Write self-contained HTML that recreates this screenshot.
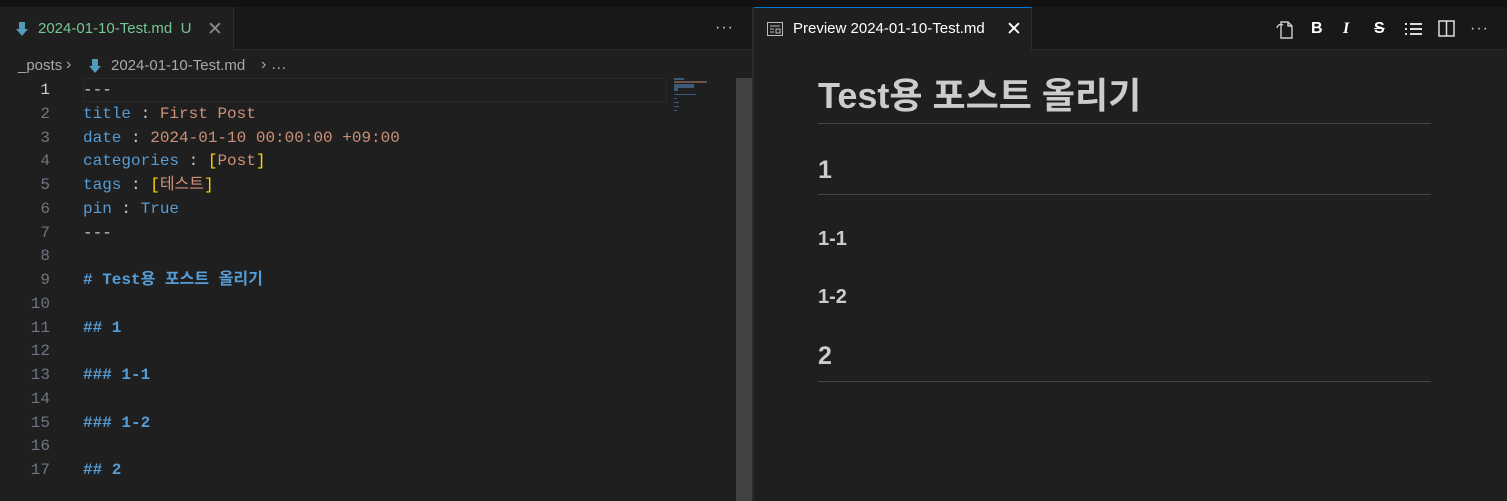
<!DOCTYPE html>
<html><head><meta charset="utf-8"><style>
*{margin:0;padding:0;box-sizing:border-box}
body{width:1507px;height:501px;overflow:hidden;background:#1f1f1f;font-family:"Segoe UI","Liberation Sans","Noto Sans CJK KR",sans-serif;position:relative}
.abs{position:absolute}
.mono{font-family:"Liberation Mono","Noto Sans CJK KR",monospace;font-size:16px;white-space:pre;line-height:24px;height:24px}
.ln{position:absolute;left:0;width:50px;text-align:right;color:#6e7681;font-family:"Liberation Mono",monospace;font-size:16px;line-height:24px}
.code{position:absolute;left:83px}
.b{color:#569cd6}.o{color:#ce9178}.w{color:#cccccc}.y{color:#ffd700}
.h{color:#569cd6;font-weight:bold}
.pv{position:absolute;left:818px;color:#cccccc;font-weight:bold;font-family:"Liberation Sans","Noto Sans CJK KR",sans-serif}
.hr{position:absolute;left:818px;width:613px;height:1px;background:#444}
</style></head><body>
<div class="abs" style="left:0;top:0;width:1507px;height:7px;background:#121212"></div>
<div class="abs" style="left:0;top:7px;width:1507px;height:43px;background:#181818;border-bottom:1px solid #2b2b2b"></div>
<div class="abs" style="left:0;top:7px;width:234px;height:43px;background:#1f1f1f;border-right:1px solid #2b2b2b"></div>
<svg class="abs" style="left:16px;top:22px" width="12" height="14" viewBox="0 0 12 14"><path d="M3 0h6v7h3l-6 7-6-7h3z" fill="#519aba"/></svg>
<div class="abs" style="left:38px;top:20px;color:#73c991;font-size:15px">2024-01-10-Test.md&nbsp; U</div>
<div class="abs" style="left:207px;top:18px;color:#8b8b8b;font-size:19px">✕</div>
<div class="abs" style="left:715px;top:19px;color:#ccc;font-size:16px;letter-spacing:1px">···</div>
<div class="abs" style="left:18px;top:57px;color:#a9a9a9;font-size:15px">_posts</div>
<div class="abs" style="left:66px;top:56px;color:#a9a9a9;font-size:16px">›</div>
<svg class="abs" style="left:89px;top:59px" width="12" height="14" viewBox="0 0 12 14"><path d="M3 0h6v7h3l-6 7-6-7h3z" fill="#519aba"/></svg>
<div class="abs" style="left:111px;top:57px;color:#a9a9a9;font-size:15px">2024-01-10-Test.md</div>
<div class="abs" style="left:261px;top:56px;color:#a9a9a9;font-size:16px">› …</div>
<div class="abs" style="left:83px;top:78px;width:584px;height:24px;border:1px solid #282828"></div>
<div class="ln" style="top:78px;color:#ccc">1</div>
<div class="code mono w" style="top:78px">---</div>
<div class="ln" style="top:102px">2</div><div class="code mono" style="top:102px"><span class="b">title</span><span class="w"> : </span><span class="o">First Post</span></div>
<div class="ln" style="top:126px">3</div><div class="code mono" style="top:126px"><span class="b">date</span><span class="w"> : </span><span class="o">2024-01-10 00:00:00 +09:00</span></div>
<div class="ln" style="top:149px">4</div><div class="code mono" style="top:149px"><span class="b">categories</span><span class="w"> : </span><span class="y">[</span><span class="o">Post</span><span class="y">]</span></div>
<div class="ln" style="top:173px">5</div><div class="code mono" style="top:173px"><span class="b">tags</span><span class="w"> : </span><span class="y">[</span><span class="o">테스트</span><span class="y">]</span></div>
<div class="ln" style="top:197px">6</div><div class="code mono" style="top:197px"><span class="b">pin</span><span class="w"> : </span><span class="b">True</span></div>
<div class="ln" style="top:221px">7</div><div class="code mono w" style="top:221px">---</div>
<div class="ln" style="top:244px">8</div>
<div class="ln" style="top:268px">9</div><div class="code mono h" style="top:268px"># Test용 포스트 올리기</div>
<div class="ln" style="top:292px">10</div>
<div class="ln" style="top:316px">11</div><div class="code mono h" style="top:316px">## 1</div>
<div class="ln" style="top:339px">12</div>
<div class="ln" style="top:363px">13</div><div class="code mono h" style="top:363px">### 1-1</div>
<div class="ln" style="top:387px">14</div>
<div class="ln" style="top:411px">15</div><div class="code mono h" style="top:411px">### 1-2</div>
<div class="ln" style="top:434px">16</div>
<div class="ln" style="top:458px">17</div><div class="code mono h" style="top:458px">## 2</div>
<!-- minimap -->
<div class="abs" style="left:674px;top:78px;width:10px;height:2px;background:#3d5a78"></div>
<div class="abs" style="left:674px;top:81px;width:33px;height:2px;background:#6b5448"></div>
<div class="abs" style="left:674px;top:84px;width:20px;height:4px;background:#3d5a78"></div>
<div class="abs" style="left:674px;top:88px;width:4px;height:3px;background:#3d5a78"></div>
<div class="abs" style="left:674px;top:94px;width:22px;height:1px;background:#3d5a78"></div>
<div class="abs" style="left:674px;top:98px;width:3px;height:1px;background:#3d5a78"></div>
<div class="abs" style="left:674px;top:102px;width:5px;height:1px;background:#3d5a78"></div>
<div class="abs" style="left:674px;top:106px;width:5px;height:1px;background:#3d5a78"></div>
<div class="abs" style="left:674px;top:110px;width:3px;height:1px;background:#3d5a78"></div>
<div class="abs" style="left:736px;top:78px;width:16px;height:423px;background:#424242"></div>
<div class="abs" style="left:752px;top:7px;width:2px;height:494px;background:#2b2b2b"></div>
<div class="abs" style="left:754px;top:7px;width:278px;height:44px;background:#1f1f1f;border-top:1px solid #0078d4;border-right:1px solid #2b2b2b"></div>
<svg class="abs" style="left:767px;top:22px" width="16" height="14" viewBox="0 0 16 14"><rect x="0.5" y="0.5" width="15" height="13" fill="none" stroke="#bbb"/><path d="M3 4h10M3 7h4M3 10h4" stroke="#bbb"/><rect x="9" y="7" width="4" height="4" fill="none" stroke="#bbb"/></svg>
<div class="abs" style="left:793px;top:20px;color:#fff;font-size:15px">Preview 2024-01-10-Test.md</div>
<div class="abs" style="left:1006px;top:18px;color:#fff;font-size:19px">✕</div>
<svg class="abs" style="left:1275px;top:20px" width="20" height="20" viewBox="0 0 20 20"><path d="M6 2h7l4 4v12H6z M13 2v4h4" fill="none" stroke="#ccc" stroke-width="1.4"/><path d="M2 8a4 4 0 0 1 6-3" fill="none" stroke="#ccc" stroke-width="1.4"/></svg>
<div class="abs" style="left:1311px;top:20px;color:#fff;font-weight:bold;font-size:16px;font-family:'Liberation Sans'">B</div>
<div class="abs" style="left:1343px;top:20px;color:#fff;font-weight:bold;font-style:italic;font-size:16px;font-family:'Liberation Serif'">I</div>
<div class="abs" style="left:1374px;top:20px;color:#fff;font-weight:bold;font-size:16px;font-family:'Liberation Sans';text-decoration:line-through">S</div>
<svg class="abs" style="left:1405px;top:21px" width="17" height="16" viewBox="0 0 17 16"><path d="M0 3h2M0 8h2M0 13h2M5 3h12M5 8h12M5 13h12" stroke="#ddd" stroke-width="2"/></svg>
<svg class="abs" style="left:1438px;top:20px" width="17" height="17" viewBox="0 0 17 17"><rect x="1" y="1" width="15" height="15" fill="none" stroke="#ddd" stroke-width="1.5"/><path d="M8.5 1v15" stroke="#ddd" stroke-width="1.5"/></svg>
<div class="abs" style="left:1470px;top:20px;color:#ccc;font-size:16px;letter-spacing:1px">···</div>
<div class="pv" style="top:67px;font-size:36px">Test용 포스트 올리기</div>
<div class="hr" style="top:123px"></div>
<div class="pv" style="top:156px;font-size:25px">1</div>
<div class="hr" style="top:194px"></div>
<div class="pv" style="top:228px;font-size:20px">1-1</div>
<div class="pv" style="top:286px;font-size:20px">1-2</div>
<div class="pv" style="top:342px;font-size:25px">2</div>
<div class="hr" style="top:381px"></div>
</body></html>
